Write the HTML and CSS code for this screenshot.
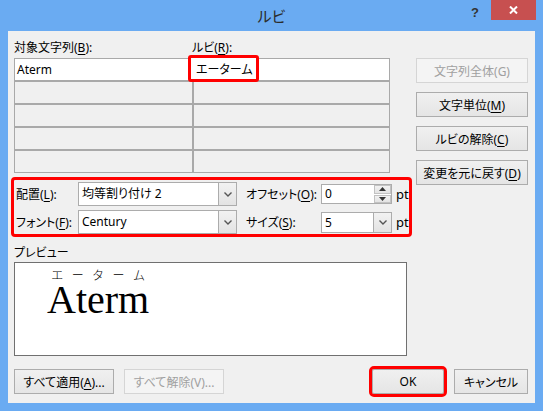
FILE: index.html
```html
<!DOCTYPE html>
<html lang="ja">
<head>
  <meta charset="UTF-8" />
  <title>ルビ</title>
  <link rel="stylesheet" href="styles.css">
</head>
<body>
  <div class="window">
    <div class="titlebar">
      <span></span>
      <div class="title">ルビ</div>
      <div class="caption">
        <span class="help">?</span>
        <button class="close">
          <svg width="9" height="8" viewBox="0 0 9 8"><path d="M1 0.5 L8 7.5 M8 0.5 L1 7.5" stroke="#fff" stroke-width="2"/></svg>
        </button>
      </div>
    </div>

    <div class="client">
      <div class="main">
        <div class="left">
          <div class="field-labels">
            <span class="base-label">対象文字列(<u>B</u>):</span>
            <span>ルビ(<u>R</u>):</span>
          </div>

          <div class="ruby-grid">
            <div class="cell current">Aterm</div>
            <div class="cell current ruby-cell"><span class="callout">エーターム</span></div>
            <div class="cell"></div><div class="cell"></div>
            <div class="cell"></div><div class="cell"></div>
            <div class="cell"></div><div class="cell"></div>
            <div class="cell"></div><div class="cell"></div>
          </div>

          <div class="settings">
            <label>配置(<u>L</u>):</label>
            <div class="combo">
              <span>均等割り付け 2</span>
              <i class="drop"><svg width="8" height="5" viewBox="0 0 8 5"><path d="M0.5 0.5 L4 4 L7.5 0.5" fill="none" stroke="#555" stroke-width="1.4"/></svg></i>
            </div>
            <label class="sub">オフセット(<u>O</u>):</label>
            <div class="spin">
              <span>0</span>
              <div class="spin-buttons">
                <i><svg width="7" height="4" viewBox="0 0 7 4"><path d="M0 4 L3.5 0 L7 4 Z" fill="#333"/></svg></i>
                <i><svg width="7" height="4" viewBox="0 0 7 4"><path d="M0 0 L3.5 4 L7 0 Z" fill="#333"/></svg></i>
              </div>
            </div>
            <span class="unit">pt</span>

            <label>フォント(<u>F</u>):</label>
            <div class="combo">
              <span>Century</span>
              <i class="drop"><svg width="8" height="5" viewBox="0 0 8 5"><path d="M0.5 0.5 L4 4 L7.5 0.5" fill="none" stroke="#555" stroke-width="1.4"/></svg></i>
            </div>
            <label class="sub">サイズ(<u>S</u>):</label>
            <div class="combo small">
              <span>5</span>
              <i class="drop"><svg width="8" height="5" viewBox="0 0 8 5"><path d="M0.5 0.5 L4 4 L7.5 0.5" fill="none" stroke="#555" stroke-width="1.4"/></svg></i>
            </div>
            <span class="unit">pt</span>
          </div>

          <div class="preview-label">プレビュー</div>
          <div class="preview">
            <div class="ruby">
              <div class="rt"><span>エ</span><span>ー</span><span>タ</span><span>ー</span><span>ム</span></div>
              <div class="rb">Aterm</div>
            </div>
          </div>
        </div>

        <div class="side">
          <button class="btn" disabled>文字列全体(G)</button>
          <button class="btn">文字単位(<u>M</u>)</button>
          <button class="btn">ルビの解除(<u>C</u>)</button>
          <button class="btn">変更を元に戻す(<u>D</u>)</button>
        </div>
      </div>

      <div class="footer">
        <button class="btn apply">すべて適用(<u>A</u>)...</button>
        <button class="btn apply" disabled>すべて解除(V)...</button>
        <span class="spacer"></span>
        <button class="btn ok">OK</button>
        <button class="btn cancel">キャンセル</button>
      </div>
    </div>
  </div>
</body>
</html>
```

FILE: styles.css
```css
body {
  margin: 0;
  font-family: 'Noto Sans', 'Noto Sans CJK JP', sans-serif;
  font-size: 12px;
  font-feature-settings: "palt";
  color: #000;
}

.window {
  width: 543px;
  height: 411px;
  background: #6aabf2;
  padding: 0 8px 8px;
  box-sizing: border-box;
  display: flex;
  flex-direction: column;
}

/* title bar */
.titlebar {
  height: 31px;
  flex: none;
  display: grid;
  grid-template-columns: 1fr auto 1fr;
}

.title {
  font-family: 'Noto Sans CJK JP', sans-serif;
  font-size: 15px;
  line-height: 31px;
  color: #2b2b2b;
}

.caption {
  display: flex;
  justify-content: flex-end;
  align-items: flex-start;
  gap: 12px;
}

.help {
  font-family: 'Liberation Sans', sans-serif;
  font-weight: bold;
  font-size: 13px;
  line-height: 13px;
  margin-top: 6px;
  color: #333;
}

.close {
  width: 45px;
  height: 20px;
  margin-right: -1px;
  border: none;
  padding: 0;
  background: #c75050;
  display: flex;
  align-items: center;
  justify-content: center;
}

/* client area */
.client {
  flex: 1;
  background: #f0f0f0;
  padding: 9px 7px 0 3px;
  display: flex;
  flex-direction: column;
}

.main {
  display: flex;
  gap: 4px;
}

.left {
  width: 401px;
}

u {
  text-decoration-thickness: 1px;
  text-underline-offset: 2px;
}

.field-labels {
  display: flex;
  padding-left: 3px;
  line-height: 16px;
  height: 16px;
}

.base-label {
  width: 178px;
}

.ruby-grid {
  margin: 2px 0 0 3px;
  width: 376px;
  box-sizing: border-box;
  padding: 1px;
  background: #a9a9a9;
  display: grid;
  grid-template-columns: 177px 195px;
  grid-auto-rows: 21px;
  gap: 2px;
}

.cell {
  background: #f0f0f0;
  line-height: 21px;
  padding-left: 2px;
}

.cell.current {
  background: #fff;
}

.ruby-cell {
  display: flex;
  align-items: flex-start;
}

/* red frame marking the ruby entry */
.callout {
  position: relative;
  margin: -4px 0 0 -8px;
  height: 27px;
  box-sizing: border-box;
  border: 3px solid #f00;
  border-radius: 3px;
  padding: 1px 3px 0 5px;
  line-height: 20px;
  font-family: 'Noto Sans CJK JP', sans-serif;
  background: #fff;
}

/* ruby settings */
.settings {
  margin-top: 4px;
  height: 60px;
  box-sizing: border-box;
  border: 3px solid #f00;
  border-radius: 4px;
  padding: 2px 0 0 1px;
  display: grid;
  grid-template-columns: 63px 159px 84px 71px auto;
  grid-template-rows: 24px 24px;
  row-gap: 4px;
  align-items: center;
}

.settings label {
  padding-left: 1px;
  white-space: nowrap;
}

.settings .sub {
  padding-left: 9px;
}

.combo {
  height: 24px;
  box-sizing: border-box;
  border: 1px solid #acacac;
  background: #fff;
  display: flex;
}

.combo span {
  flex: 1;
  padding-left: 3px;
  line-height: 22px;
}

.combo.small {
  height: 21px;
}

.combo.small span {
  line-height: 19px;
}

.drop {
  width: 17px;
  border-left: 1px solid #acacac;
  background: linear-gradient(#f2f2f2, #e3e3e3);
  display: flex;
  align-items: center;
  justify-content: center;
}

.spin {
  height: 20px;
  box-sizing: border-box;
  border: 1px solid #acacac;
  background: #fff;
  display: flex;
}

.spin span {
  flex: 1;
  padding-left: 3px;
  line-height: 18px;
}

.spin-buttons {
  width: 17px;
  display: flex;
  flex-direction: column;
  gap: 1px;
  background: #fff;
}

.spin-buttons i {
  flex: 1;
  border: 1px solid #c2c2c2;
  background: linear-gradient(#f2f2f2, #e3e3e3);
  display: flex;
  align-items: center;
  justify-content: center;
}

.unit {
  padding-left: 4px;
  font-size: 13px;
}

/* preview */
.preview-label {
  margin-top: 7px;
  padding-left: 3px;
  line-height: 16px;
  font-family: 'Noto Sans CJK JP', sans-serif;
}

.preview {
  margin: 2px 0 0 3px;
  width: 393px;
  height: 94px;
  box-sizing: border-box;
  border: 1px solid #707070;
  background: #fff;
  padding: 4px 0 0 32px;
}

.ruby {
  display: inline-flex;
  flex-direction: column;
}

.rt {
  display: flex;
  justify-content: space-around;
  font-family: 'Noto Sans CJK JP', sans-serif;
  font-feature-settings: normal;
  font-weight: 300;
  font-size: 12px;
  line-height: 12px;
  height: 12px;
}

.rb {
  margin-top: -1px;
  font-family: 'Liberation Serif', serif;
  font-size: 40px;
  line-height: 40px;
}

/* buttons */
.side {
  width: 112px;
  padding-top: 18px;
  display: flex;
  flex-direction: column;
  gap: 9px;
}

.btn {
  height: 25px;
  padding: 0;
  border: 1px solid #acacac;
  border-radius: 0;
  background: linear-gradient(#f0f0f0, #e5e5e5);
  font-family: 'Noto Sans', 'Noto Sans CJK JP', sans-serif;
  font-feature-settings: "palt";
  font-size: 12px;
  color: #000;
}

.btn:disabled {
  border-color: #d5d5d5;
  background: #f4f4f4;
  color: #a0a0a0;
}

.footer {
  margin-top: 13px;
  padding-left: 3px;
  display: flex;
  gap: 10px;
}

.footer .apply {
  width: 100px;
}

.spacer {
  flex: 1;
}

.footer .ok {
  width: 72px;
  outline: 3px solid #f00;
  border-radius: 2px;
}

.footer .cancel {
  width: 74px;
}
```
